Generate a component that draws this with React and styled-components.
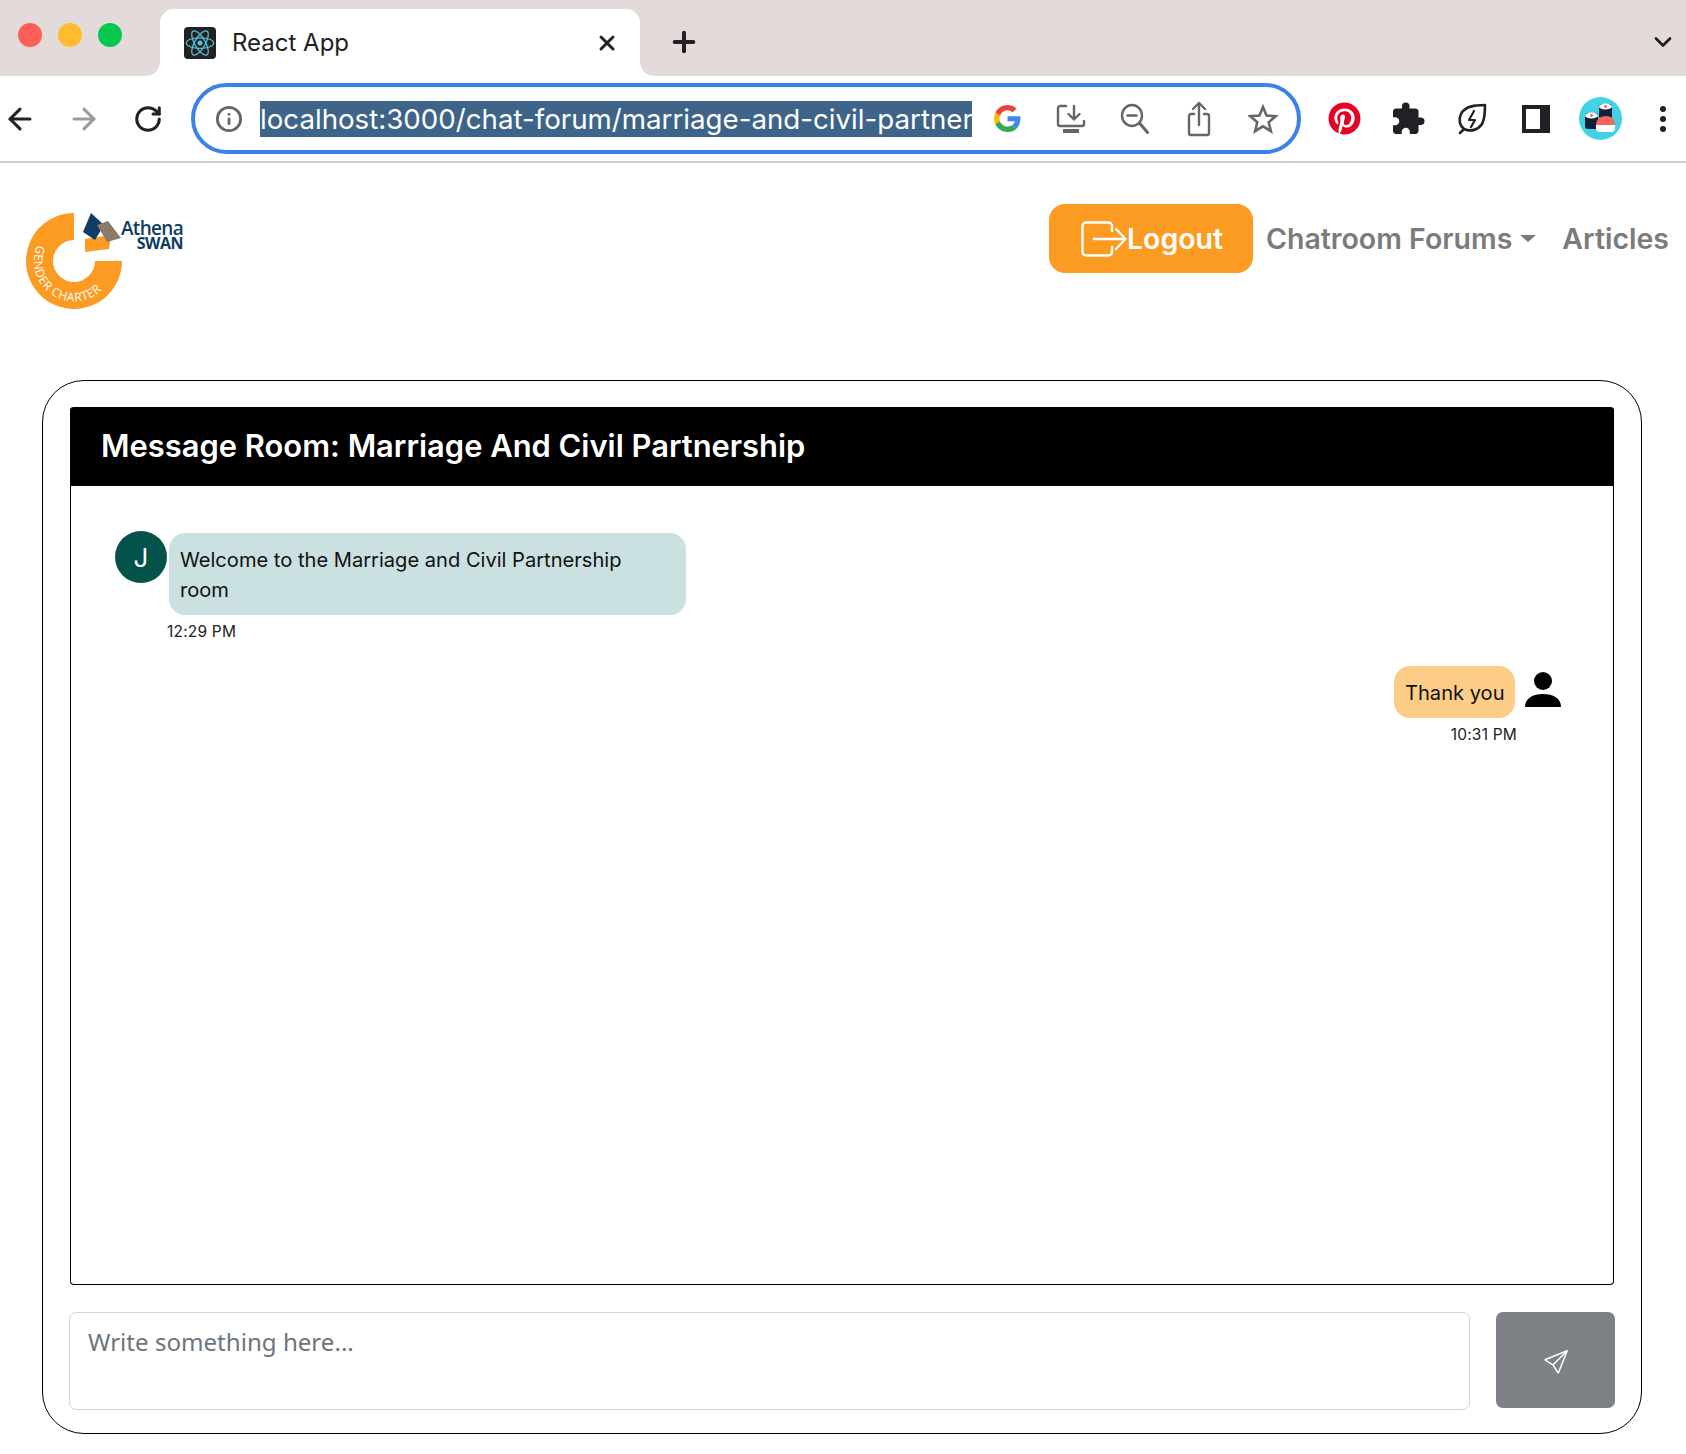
import React from 'react'
import styled, { createGlobalStyle } from 'styled-components'
import { ArrowLeft, ArrowRight, RotateCw, Info, X, Plus, ChevronDown } from 'lucide-react'
import { FaPinterest } from 'react-icons/fa'
import { MdExtension } from 'react-icons/md'
import { BsSend } from 'react-icons/bs'

const GlobalStyle = createGlobalStyle`
  body {
    margin: 0;
    background: #fff;
    font-family: Inter, "Liberation Sans", sans-serif;
    color: #111;
  }
`

const TabStrip = styled.div`
  display: flex;
  align-items: flex-end;
  height: 76px;
  background: #e3dbd9;
`
const Lights = styled.div`
  flex: none;
  display: flex;
  gap: 16px;
  width: 142px;
  padding: 0 0 29px 18px;
  box-sizing: border-box;
  align-self: flex-end;
`
const Light = styled.span`
  width: 24px;
  height: 24px;
  border-radius: 50%;
  background: ${p => p.$color};
`
const Tab = styled.div`
  flex: none;
  position: relative;
  display: flex;
  align-items: center;
  width: 480px;
  height: 67px;
  margin-left: 18px;
  padding: 0 21px 0 24px;
  box-sizing: border-box;
  background: #fff;
  border-radius: 14px 14px 0 0;
  font-size: 24px;
  color: #222;
  &::before, &::after {
    content: '';
    position: absolute;
    bottom: 0;
    width: 14px;
    height: 14px;
  }
  &::before {
    left: -14px;
    background: radial-gradient(circle at 0 0, transparent 13.5px, #fff 14px);
  }
  &::after {
    right: -14px;
    background: radial-gradient(circle at 100% 0, transparent 13.5px, #fff 14px);
  }
`
const Favicon = styled.span`
  display: flex;
  align-items: center;
  justify-content: center;
  width: 32px;
  height: 32px;
  margin-right: 16px;
  background: #222;
  border-radius: 4px;
`
const TabTitle = styled.span`
  flex: 1;
`
const StripButton = styled.span`
  flex: none;
  display: flex;
  color: #222;
  margin: 0 0 ${p => p.$bottom}px ${p => p.$left}px;
`
const Toolbar = styled.div`
  display: flex;
  align-items: center;
  height: 85px;
  border-bottom: 2px solid #cfcfcf;
`
const Slot = styled.span`
  flex: none;
  display: flex;
  align-items: center;
  justify-content: center;
  width: ${p => p.$w || 64}px;
  height: 64px;
  margin: 0 ${p => p.$after || 0}px 0 ${p => p.$before || 0}px;
  color: ${p => p.$color || '#202124'};
`
const UrlBar = styled.div`
  flex: none;
  display: flex;
  align-items: center;
  width: 1110px;
  height: 71px;
  margin: 0 11px;
  padding: 0 2px;
  box-sizing: border-box;
  border: 4px solid #3b82e8;
  border-radius: 36px;
`
const UrlText = styled.div`
  flex: none;
  width: 712px;
  height: 36px;
  overflow: hidden;
  white-space: nowrap;
  background: #3f6489;
  color: #fff;
  font-size: 27.7px;
  line-height: 36px;
`
const Sidebar = styled.span`
  width: 14px;
  height: 20px;
  border: solid #202124;
  border-width: 4px 10px 4px 4px;
`
const ProfileDot = styled.span`
  display: flex;
  align-items: center;
  justify-content: center;
  width: 43px;
  height: 43px;
  border-radius: 50%;
  background: #41d2e3;
`
const Dots = styled.span`
  display: flex;
  flex-direction: column;
  gap: 4px;
  & > i {
    width: 6px;
    height: 6px;
    border-radius: 50%;
    background: #202124;
  }
`

const Navbar = styled.nav`
  display: flex;
  align-items: flex-start;
  height: 217px;
  padding: 41px 17px 0 25px;
  box-sizing: border-box;
`
const Logo = styled.svg`
  display: block;
  margin-top: 6px;
`
const NavRight = styled.div`
  display: flex;
  align-items: center;
  margin-left: auto;
`
const LogoutButton = styled.button`
  display: flex;
  align-items: center;
  width: 204px;
  height: 69px;
  padding: 0 0 0 32px;
  box-sizing: border-box;
  border: none;
  border-radius: 16px;
  background: #fb9b22;
  color: #fff;
  font: 600 28.5px Inter, sans-serif;
`
const NavLink = styled.a`
  display: flex;
  align-items: center;
  margin-left: ${p => p.$left}px;
  color: #7b7b7b;
  font-size: 28.5px;
  font-weight: 600;
`
const Caret = styled.span`
  width: 0;
  height: 0;
  margin-left: 8px;
  border-style: solid;
  border-width: 7px 8px 0 8px;
  border-color: #7b7b7b transparent transparent transparent;
`

const Panel = styled.section`
  width: 1600px;
  height: 1054px;
  margin-left: 42px;
  padding: 26px 27px 0;
  box-sizing: border-box;
  border: 1px solid #000;
  border-radius: 42px;
`
const Room = styled.div`
  display: flex;
  flex-direction: column;
  height: 878px;
  box-sizing: border-box;
  border: solid #000;
  border-width: 0 1px 1px;
  border-radius: 4px;
`
const RoomHeader = styled.h2`
  margin: 0 -1px;
  height: 79px;
  padding-left: 31px;
  background: #000;
  border-radius: 4px 4px 0 0;
  color: #fff;
  font-size: 30.9px;
  font-weight: 600;
  line-height: 78px;
`
const Messages = styled.div`
  display: flex;
  flex-direction: column;
  padding: 45px 52px 0 44px;
`
const Message = styled.div`
  display: flex;
  flex-direction: column;
  align-items: ${p => (p.$mine ? 'flex-end' : 'flex-start')};
  margin-top: ${p => (p.$mine ? 25 : 0)}px;
`
const MessageRow = styled.div`
  display: flex;
  align-items: flex-start;
`
const Avatar = styled.span`
  display: flex;
  align-items: center;
  justify-content: center;
  width: 52px;
  height: 52px;
  margin-right: 2px;
  border-radius: 50%;
  background: #04534a;
  color: #fff;
  font-size: 26px;
`
const Bubble = styled.div`
  width: ${p => p.$width}px;
  margin-top: ${p => (p.$mine ? 0 : 2)}px;
  padding: 12px 11px 10px;
  box-sizing: border-box;
  border-radius: 16px;
  background: ${p => (p.$mine ? '#fdcd87' : '#cbe0e0')};
  color: #111;
  font-size: 20.1px;
  line-height: 30px;
  white-space: ${p => (p.$mine ? 'nowrap' : 'normal')};
`
const UserIcon = styled.svg`
  display: block;
  margin: 6px 0 0 10px;
`
const Time = styled.div`
  margin: 8px ${p => p.$right || 0}px 0 ${p => p.$left || 0}px;
  font-size: 15.5px;
  letter-spacing: 0.2px;
  line-height: 18px;
  color: #222;
`
const Composer = styled.form`
  display: flex;
  align-items: flex-start;
  gap: 26px;
  margin: 27px -1px 0 -1px;
`
const MessageInput = styled.textarea`
  flex: none;
  width: 1401px;
  height: 98px;
  padding: 13px 18px;
  box-sizing: border-box;
  border: 1px solid #ced4da;
  border-radius: 7px;
  resize: none;
  outline: none;
  font: 24.1px/32px "Noto Sans", sans-serif;
  &::placeholder {
    color: #6c757d;
    opacity: 1;
  }
`
const SendButton = styled.button`
  display: flex;
  align-items: center;
  justify-content: center;
  width: 119px;
  height: 96px;
  padding: 4px 0 0;
  border: none;
  border-radius: 7px;
  background: #7e8185;
  color: #fff;
`

const ReactMark = ({ size }) => (
  <svg width={size} height={size} viewBox="-12 -12 24 24" fill="none" stroke="#53c1de" strokeWidth="1">
    <circle r="2" fill="#53c1de" stroke="none" />
    <ellipse rx="11" ry="4.2" />
    <ellipse rx="11" ry="4.2" transform="rotate(60)" />
    <ellipse rx="11" ry="4.2" transform="rotate(120)" />
  </svg>
)

const GoogleG = () => (
  <svg width="27" height="27" viewBox="0 0 48 48">
    <path fill="#EA4335" d="M24 9.5c3.5 0 6.7 1.2 9.2 3.6l6.9-6.9C35.9 2.4 30.5 0 24 0 14.6 0 6.5 5.4 2.6 13.2l8 6.2C12.5 13.7 17.8 9.5 24 9.5z" />
    <path fill="#4285F4" d="M46.98 24.55c0-1.57-.15-3.09-.38-4.55H24v9.02h12.94c-.58 2.96-2.26 5.48-4.78 7.18l7.73 6c4.51-4.18 7.09-10.36 7.09-17.65z" />
    <path fill="#FBBC05" d="M10.53 28.59c-.48-1.45-.76-2.99-.76-4.59s.27-3.14.76-4.59l-7.98-6.19C.92 16.46 0 20.12 0 24c0 3.88.92 7.54 2.56 10.78l7.97-6.19z" />
    <path fill="#34A853" d="M24 48c6.48 0 11.93-2.13 15.89-5.81l-7.73-6c-2.15 1.45-4.92 2.3-8.16 2.3-6.26 0-11.57-4.22-13.47-9.91l-7.98 6.19C6.51 42.62 14.62 48 24 48z" />
  </svg>
)

const SaveIcon = () => (
  <svg width="30" height="30" viewBox="0 0 30 30" fill="none" stroke="#666" strokeWidth="2.4" strokeLinecap="round" strokeLinejoin="round">
    <path d="M10 2H4a2 2 0 0 0-2 2v16a2 2 0 0 0 2 2h22a2 2 0 0 0 2-2v-3" />
    <path d="M18 2v13M12.5 10l5.5 5.5 5.500-5.500" />
    <path d="M7 27h16" strokeWidth="4" strokeLinecap="butt" />
  </svg>
)

const ZoomOutIcon = () => (
  <svg width="30" height="32" viewBox="0 0 30 32" fill="none" stroke="#666" strokeWidth="2.4" strokeLinecap="round">
    <ellipse cx="12" cy="12.5" rx="10" ry="10.500" />
    <path d="M7.500 12.500h9" />
    <path d="M19.500 20l8 9.500" strokeWidth="3" />
  </svg>
)

const ShareIcon = () => (
  <svg width="24" height="36" viewBox="0 0 24 36" fill="none" stroke="#666" strokeWidth="2.4" strokeLinecap="round" strokeLinejoin="round">
    <path d="M7 13H4a2 2 0 0 0-2 2v17a2 2 0 0 0 2 2h16a2 2 0 0 0 2-2V15a2 2 0 0 0-2-2h-3" />
    <path d="M12 24V2M6 8l6-6 6 6" />
  </svg>
)

const StarIcon = () => (
  <svg width="30" height="30" viewBox="0 0 30 30" fill="none" stroke="#666" strokeWidth="2.600" strokeLinejoin="miter">
    <path d="M15 3l3.500 8.500 9.200.7-7 6 2.200 9L15 22.300 7.100 27.200l2.200-9-7-6 9.200-.7z" />
  </svg>
)

const LeafIcon = () => (
  <svg width="30" height="32" viewBox="0 0 30 32" fill="none" stroke="#202124" strokeWidth="2.6" strokeLinecap="round" strokeLinejoin="round">
    <path d="M28 2C18 2 8 3 4 11c-3 6-1 12 3 15 7 3 14 1 18-5 3-5 3-12 3-19z" />
    <path d="M7 26l-4 4" />
    <path d="M17 8l-5 9h6l-4 7" strokeWidth="2.2" />
  </svg>
)

const SushiIcon = () => (
  <svg width="34" height="34" viewBox="0 0 34 34">
    <rect x="16" y="2" width="13" height="15" rx="3" fill="#14203a" />
    <ellipse cx="22.5" cy="4.5" rx="6.5" ry="3" fill="#fff" />
    <circle cx="22.5" cy="4.5" r="1.4" fill="#f25b4e" />
    <rect x="2" y="11" width="13" height="16" rx="3" fill="#14203a" />
    <ellipse cx="8.5" cy="13.5" rx="6.5" ry="3" fill="#fff" />
    <circle cx="8.5" cy="13.5" r="1.4" fill="#f25b4e" />
    <path d="M13 23c0-6 5-9 10-9s9 3 9 9z" fill="#f2675a" />
    <path d="M13 23h19v3a4 4 0 0 1-4 4H17a4 4 0 0 1-4-4z" fill="#fff" />
  </svg>
)

const AthenaLogo = () => (
  <Logo width="160" height="100" viewBox="0 0 160 100">
    <defs>
      <path id="charter-arc" d="M12.500 35A40 40 0 0 0 82 74" fill="none" />
    </defs>
    <path fill="#fb9b22" d="M49 3A48 48 0 1 0 97 51H70A21 21 0 1 1 49 30Z" />
    <path fill="#fb9b22" d="M60 29L86 25 84 39 60 42Z" />
    <path fill="#0f3c62" d="M66 3L79 15 70 30 58 22Z" />
    <path fill="#8b7a69" d="M72 15L83 11 96 28 82 32Z" />
    <text fontFamily="'Open Sans', sans-serif" fontSize="12" letterSpacing="0.6" fill="#fff">
      <textPath href="#charter-arc">GENDER CHARTER</textPath>
    </text>
    <text x="158" y="25" textAnchor="end" fontFamily="'Open Sans', sans-serif" fontWeight="600" fontSize="19" letterSpacing="-0.7" fill="#0f3c62">Athena</text>
    <text x="158" y="39" textAnchor="end" fontFamily="'Open Sans', sans-serif" fontWeight="700" fontSize="16" letterSpacing="-0.5" fill="#0f3c62">SWAN</text>
  </Logo>
)

const LogoutIcon = () => (
  <svg width="46" height="36" viewBox="0 0 46 36" fill="none" stroke="#fff" strokeWidth="2.4" strokeLinecap="round" strokeLinejoin="round">
    <path d="M31 10V5a3.500 3.500 0 0 0-3.500-3.500H5A3.500 3.500 0 0 0 1.500 5v26A3.500 3.500 0 0 0 5 34.500h22.500A3.500 3.500 0 0 0 31 31v-5" />
    <path d="M13 18h31M35 8l9.500 10L35 28" />
  </svg>
)

const App = () => {
  return (
    <>
      <GlobalStyle />
      <TabStrip>
        <Lights>
          <Light $color="#ff5f57" />
          <Light $color="#febc2e" />
          <Light $color="#07c84f" />
        </Lights>
        <Tab>
          <Favicon><ReactMark size={30} /></Favicon>
          <TabTitle>React App</TabTitle>
          <X size={24} strokeWidth={3} />
        </Tab>
        <StripButton $left={28} $bottom={18}><Plus size={32} strokeWidth={3} /></StripButton>
        <StripButton $left={949} $bottom={20}><ChevronDown size={28} strokeWidth={2.4} /></StripButton>
      </TabStrip>
      <Toolbar>
        <Slot $w={40} $after={12}><ArrowLeft size={34} strokeWidth={2.2} /></Slot>
        <Slot><ArrowRight size={34} strokeWidth={2.2} color="#9b9b9b" /></Slot>
        <Slot><RotateCw size={30} strokeWidth={2.4} /></Slot>
        <UrlBar>
          <Slot $w={63} $color="#666"><Info size={28} strokeWidth={2.4} /></Slot>
          <UrlText>localhost:3000/chat-forum/marriage-and-civil-partnership</UrlText>
          <Slot $before={3}><GoogleG /></Slot>
          <Slot><SaveIcon /></Slot>
          <Slot><ZoomOutIcon /></Slot>
          <Slot><ShareIcon /></Slot>
          <Slot><StarIcon /></Slot>
        </UrlBar>
        <Slot $color="#e60023"><FaPinterest size={33} /></Slot>
        <Slot><MdExtension size={36} /></Slot>
        <Slot><LeafIcon /></Slot>
        <Slot><Sidebar /></Slot>
        <Slot><ProfileDot><SushiIcon /></ProfileDot></Slot>
        <Slot $w={46} $before={8}><Dots><i /><i /><i /></Dots></Slot>
      </Toolbar>
      <Navbar>
        <AthenaLogo />
        <NavRight>
          <LogoutButton><LogoutIcon />Logout</LogoutButton>
          <NavLink $left={13}>Chatroom Forums<Caret /></NavLink>
          <NavLink $left={26}>Articles</NavLink>
        </NavRight>
      </Navbar>
      <Panel>
        <Room>
          <RoomHeader>Message Room: Marriage And Civil Partnership</RoomHeader>
          <Messages>
            <Message>
              <MessageRow>
                <Avatar>J</Avatar>
                <Bubble $width={517}>Welcome to the Marriage and Civil Partnership room</Bubble>
              </MessageRow>
              <Time $left={52}>12:29 PM</Time>
            </Message>
            <Message $mine>
              <MessageRow>
                <Bubble $mine $width={121}>Thank you</Bubble>
                <UserIcon width="36" height="36" viewBox="0 0 36 36" fill="#000">
                  <circle cx="18" cy="9" r="9" />
                  <path d="M0 35c0-9 8-13 18-13s18 4 18 13z" />
                </UserIcon>
              </MessageRow>
              <Time $right={44}>10:31 PM</Time>
            </Message>
          </Messages>
        </Room>
        <Composer>
          <MessageInput placeholder="Write something here..." />
          <SendButton type="button"><BsSend size={24} /></SendButton>
        </Composer>
      </Panel>
    </>
  )
}

export default App
